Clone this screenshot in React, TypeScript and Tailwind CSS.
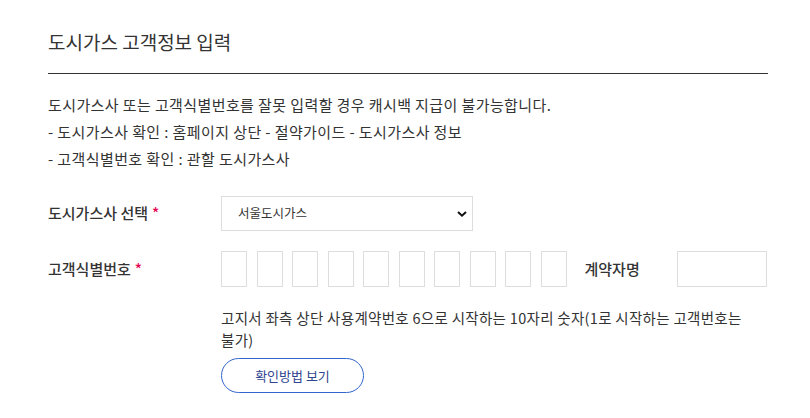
import { useState } from 'react'

const font = { fontFamily: '"Noto Sans CJK KR", "Noto Sans", sans-serif' }

function Required() {
  return <span className="ml-[4px] text-[#e5004f]">*</span>
}

export default function App() {
  const [company, setCompany] = useState('seoul')
  const [digits, setDigits] = useState<string[]>(Array(10).fill(''))
  const [name, setName] = useState('')

  const setDigit = (i: number, v: string) => {
    setDigits(prev => prev.map((d, di) => (di === i ? v.slice(-1) : d)))
  }

  return (
    <div className="min-h-screen bg-white text-[#333]" style={font}>
      <div className="ml-[48px] w-[720px] pt-[29px]">
        {/* title */}
        <h1 className="border-b border-[#333] pb-[18px] text-[19px] leading-[26px] font-normal">
          도시가스 고객정보 입력
        </h1>

        {/* notice */}
        <div className="mt-[17px] text-[15px] leading-[27px] tracking-[0.4px]">
          <p>도시가스사 또는 고객식별번호를 잘못 입력할 경우 캐시백 지급이 불가능합니다.</p>
          <p>- 도시가스사 확인 : 홈페이지 상단 - 절약가이드 - 도시가스사 정보</p>
          <p>- 고객식별번호 확인 : 관할 도시가스사</p>
        </div>

        {/* company select */}
        <div className="mt-[24px] flex items-center">
          <label className="w-[173px] text-[15px] font-medium">
            도시가스사 선택
            <Required />
          </label>
          <div className="relative">
            <select
              value={company}
              onChange={e => setCompany(e.target.value)}
              className="h-[35px] w-[252px] appearance-none border border-[#ddd] bg-white pl-[16px] pr-[30px] text-[12.5px] text-[#333] outline-none"
              style={font}
            >
              <option value="seoul">서울도시가스</option>
              <option value="yesco">예스코</option>
              <option value="kiturami">귀뚜라미에너지</option>
            </select>
            <svg
              className="pointer-events-none absolute right-[6px] top-1/2 -translate-y-1/2"
              width="10"
              height="7"
              viewBox="0 0 10 7"
            >
              <path d="M1 1.5 L5 5.2 L9 1.5" fill="none" stroke="#111" strokeWidth="2" />
            </svg>
          </div>
        </div>

        {/* customer number */}
        <div className="mt-[20px] flex items-center">
          <label className="w-[173px] text-[15px] font-medium">
            고객식별번호
            <Required />
          </label>
          <div className="flex gap-[9.5px]">
            {digits.map((d, i) => (
              <input
                key={i}
                value={d}
                onChange={e => setDigit(i, e.target.value)}
                inputMode="numeric"
                className="h-[36px] w-[26px] border border-[#ddd] text-center text-[14px] outline-none"
              />
            ))}
          </div>
          <span className="ml-[18px] w-[92px] text-[15px] font-medium">계약자명</span>
          <input
            value={name}
            onChange={e => setName(e.target.value)}
            className="h-[36px] w-[90px] border border-[#ddd] px-2 text-[13px] outline-none"
          />
        </div>

        {/* help */}
        <div className="ml-[173px]">
          <p className="mt-[20px] break-keep text-[14.5px] leading-[22px] tracking-[0.3px]">
            고지서 좌측 상단 사용계약번호 6으로 시작하는 10자리 숫자(1로 시작하는 고객번호는 불가)
          </p>
          <button
            type="button"
            className="mt-[7px] h-[35px] w-[143px] rounded-full border border-[#3366cc] bg-white text-[13px] text-[#2f4590]"
            style={font}
          >
            확인방법 보기
          </button>
        </div>
      </div>
    </div>
  )
}
